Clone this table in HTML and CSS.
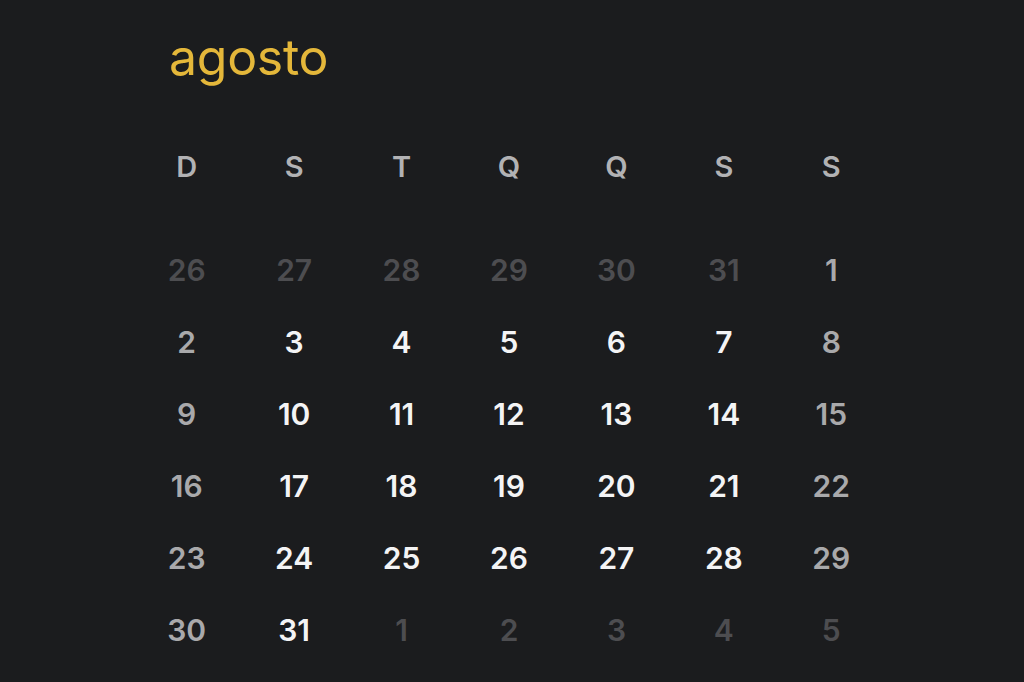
FILE: index.html
```html
<!DOCTYPE html>
<html lang="pt">
<head>
  <meta charset="UTF-8">
  <meta name="viewport" content="width=device-width, initial-scale=1.0">
  <title>Calendário</title>
  <link rel="stylesheet" href="styles.css">
</head>
<body>
  <div class="month">
    <h1 class="month-title">agosto</h1>

    <!-- Dias da semana -->
    <div class="weekdays">
      <span>D</span><span>S</span><span>T</span><span>Q</span><span>Q</span><span>S</span><span>S</span>
    </div>

    <!-- Dias -->
    <div class="days">
      <span class="other">26</span><span class="other">27</span><span class="other">28</span><span class="other">29</span><span class="other">30</span><span class="other">31</span><span class="weekend">1</span>
      <span class="weekend">2</span><span>3</span><span>4</span><span>5</span><span>6</span><span>7</span><span class="weekend">8</span>
      <span class="weekend">9</span><span>10</span><span>11</span><span>12</span><span>13</span><span>14</span><span class="weekend">15</span>
      <span class="weekend">16</span><span>17</span><span>18</span><span>19</span><span>20</span><span>21</span><span class="weekend">22</span>
      <span class="weekend">23</span><span>24</span><span>25</span><span>26</span><span>27</span><span>28</span><span class="weekend">29</span>
      <span class="weekend">30</span><span>31</span><span class="other">1</span><span class="other">2</span><span class="other">3</span><span class="other">4</span><span class="other">5</span>
    </div>
  </div>
</body>
</html>
```

FILE: styles.css
```css
/* Estilos gerais */
body {
  margin: 0;
  padding: 0;
  background-color: #1b1c1e;
  font-family: Inter, "Noto Sans", sans-serif;
  height: 682px;
  overflow: hidden;
}

.month {
  margin-left: 133px;
  width: 752px;
  padding-top: 27px;
}

.month-title {
  margin: 0 0 0 36px;
  font-size: 50px;
  font-weight: 400;
  line-height: 60px;
  color: #e4b73a;
  letter-spacing: -0.3px;
}

/* Grade de dias */
.weekdays,
.days {
  display: grid;
  grid-template-columns: repeat(7, 1fr);
  text-align: center;
}

.weekdays {
  margin-top: 44px;
  margin-bottom: 31px;
}

.weekdays span {
  font-size: 29px;
  font-weight: 600;
  line-height: 72px;
  color: #b2b2b4;
}

.days span {
  font-size: 30px;
  font-weight: 600;
  line-height: 72px;
  color: #f4f4f5;
}

.days .weekend {
  color: #a9a9ab;
}

.days .other {
  color: #4d4d50;
}
```
